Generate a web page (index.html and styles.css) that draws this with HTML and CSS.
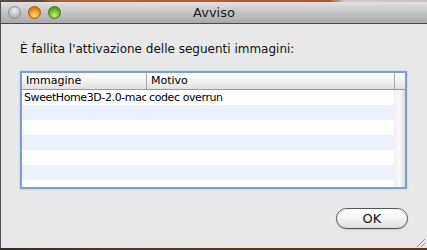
FILE: index.html
```html
<!DOCTYPE html>
<html lang="it">
  <head>
    <meta charset="UTF-8" />
    <title>Avviso</title>
    <link rel="stylesheet" href="styles.css">
  </head>
  <body>
    <div class="desk-top"></div>
    <div class="window">
      <div class="title-bar">
        <div class="lights">
          <span class="light light-close"></span>
          <span class="light light-min"></span>
          <span class="light light-max"></span>
        </div>
        <div class="title">Avviso</div>
      </div>
      <div class="content">
        <p class="message">È fallita l'attivazione delle seguenti immagini:</p>
        <div class="table-box">
          <div class="table-main">
            <div class="table-head">
              <div class="col col-image">Immagine</div>
              <div class="col col-reason">Motivo</div>
            </div>
            <div class="row"><div class="col col-image">SweetHome3D-2.0-macosx.dmg</div><div class="col col-reason">codec overrun</div></div>
            <div class="row"></div>
            <div class="row"></div>
            <div class="row"></div>
            <div class="row"></div>
            <div class="row"></div>
            <div class="row"></div>
          </div>
          <div class="table-side">
            <div class="side-head"></div>
            <div class="side-track"></div>
          </div>
        </div>
        <div class="actions">
          <button class="ok-button">OK</button>
        </div>
        <div class="grip"></div>
      </div>
    </div>
    <div class="desk-bottom"></div>
  </body>
</html>
```

FILE: styles.css
```css
body {
  margin: 0;
  width: 427px;
  height: 250px;
  overflow: hidden;
  font-family: "DejaVu Sans", "Liberation Sans", sans-serif;
  background-color: #e8e8e8;
}

.desk-top {
  height: 2px;
  background: linear-gradient(to right, #5a4c44 0, #5a4c44 40px, #c0602c 60px, #b8502a 330px, #d8c8c8 345px, #d0c0c0 100%);
}

.window {
  height: 246px;
  display: flex;
  flex-direction: column;
  border-left: 1px solid #505050;
  position: relative;
}

.title-bar {
  height: 21px;
  background: linear-gradient(#e2e2e2, #c6c6c6 45%, #a9a9a9);
  border-bottom: 1px solid #4a4a4a;
  display: flex;
  align-items: center;
  position: relative;
}

.lights {
  display: flex;
  gap: 7px;
  padding-left: 7px;
}

.light {
  width: 13px;
  height: 13px;
  border-radius: 50%;
  box-sizing: border-box;
}

.light-close {
  background: radial-gradient(circle at 50% 30%, #eeeeee 0, #c8c8c8 45%, #a0a0a0 100%);
  border: 1px solid #8c8c8c;
}

.light-min {
  background: radial-gradient(circle at 50% 75%, #ffe060 0, #f5a020 45%, #b45a08 100%);
  border: 1px solid #9a5a14;
}

.light-max {
  background: radial-gradient(circle at 50% 75%, #c8f070 0, #78c030 45%, #3c7a10 100%);
  border: 1px solid #3e7418;
}

.title {
  position: absolute;
  left: 0;
  right: 0;
  top: 3px;
  text-align: center;
  font-size: 13px;
  color: #1a1a1a;
}

.content {
  flex: 1;
  padding: 0 0 0 19px;
  display: flex;
  flex-direction: column;
}

.message {
  margin: 18px 0 0;
  font-size: 12px;
  color: #111;
  line-height: 15px;
}

.table-box {
  margin-top: 14px;
  width: 383px;
  height: 114px;
  display: flex;
  background: #fff;
  border: 2px solid #7b9fcf;
  box-shadow: 0 0 2px #a8c2e4;
  font-size: 11px;
  color: #000;
}

.table-main {
  flex: 1;
  overflow: hidden;
}

.table-head {
  height: 16px;
  display: flex;
  background: linear-gradient(#ffffff, #f2f2f2 50%, #e0e0e0);
  border-bottom: 1px solid #9a9a9a;
}

.table-head .col {
  line-height: 16px;
  padding-left: 4px;
}

.col {
  overflow: hidden;
  white-space: nowrap;
  text-overflow: clip;
  box-sizing: border-box;
  padding-left: 2px;
}

.col-image {
  width: 125px;
  border-right: 1px solid #a8a8a8;
}

.col-reason {
  flex: 1;
}

.row {
  height: 15px;
  display: flex;
  line-height: 15px;
}

.row .col {
  letter-spacing: -0.4px;
}

.row .col-image {
  border-right: 1px solid #fff;
}

.row:nth-child(odd) {
  background: #ecf2fd;
}

.table-side {
  width: 11px;
  display: flex;
  flex-direction: column;
}

.side-head {
  height: 16px;
  background: linear-gradient(#ffffff, #f2f2f2 50%, #e0e0e0);
  border-bottom: 1px solid #9a9a9a;
  border-left: 1px solid #a8a8a8;
}

.side-track {
  flex: 1;
  background: linear-gradient(to right, #f0f0f0, #fafafa 50%, #dcdcdc);
}

.actions {
  display: flex;
  justify-content: flex-end;
  padding: 19px 19px 0 0;
}

.ok-button {
  width: 72px;
  height: 21px;
  padding: 0;
  border: 1px solid #555;
  border-radius: 11px;
  background: linear-gradient(#ffffff, #f4f4f4 50%, #dedede);
  font-family: "DejaVu Sans", "Liberation Sans", sans-serif;
  font-size: 13px;
  color: #111;
  box-shadow: 0 1px 1px rgba(0, 0, 0, 0.15);
}

.grip {
  position: absolute;
  right: 2px;
  bottom: 1px;
  width: 10px;
  height: 10px;
  background: repeating-linear-gradient(135deg, transparent 0, transparent 2px, #8a8a8a 2px, #8a8a8a 3px);
  clip-path: polygon(100% 0, 100% 100%, 0 100%);
}

.desk-bottom {
  height: 2px;
  background: linear-gradient(to right, #3a2c24, #5c3420 30%, #6a3018 100%);
}
```
